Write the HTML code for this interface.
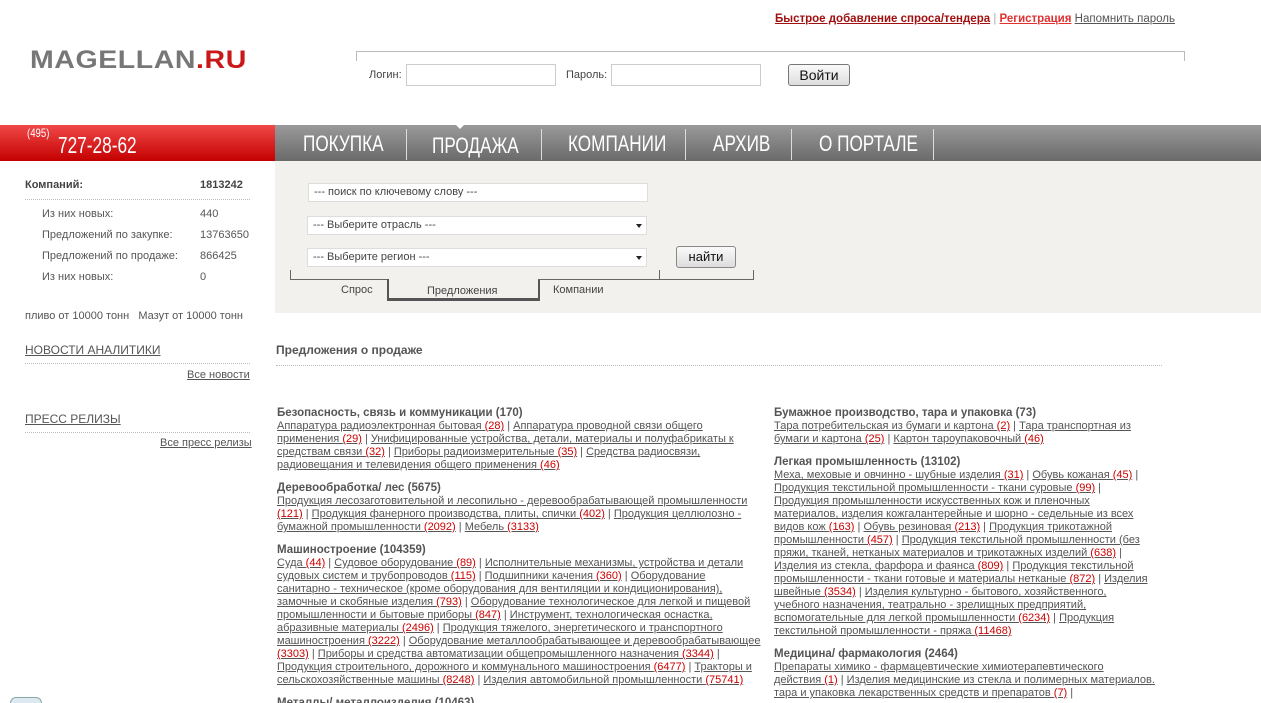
<!DOCTYPE html>
<html style="overflow:hidden;height:703px"><head><meta charset="utf-8"><style>
*{margin:0;padding:0;box-sizing:border-box}
body{width:1261px;height:703px;overflow:hidden;background:#fff;font-family:"Liberation Sans",sans-serif;font-size:11px;color:#555;position:relative}
.a{position:absolute;white-space:nowrap}
a{color:#555;text-decoration:underline}
.n{color:#cc0000}
.col{position:absolute;line-height:13px;font-size:11px;white-space:nowrap}
.col b{font-size:11.5px;color:#555;display:block}
.col p{margin-bottom:10px}
.nav span{position:absolute;top:0;height:36px;line-height:38px;color:#fff;font-family:"Liberation Sans Narrow","Liberation Sans",sans-serif;font-size:22px;transform:scaleX(.78);transform-origin:left}
.sep{position:absolute;top:4px;width:1px;height:31px;background:#ddd}
.inp{position:absolute;background:#fff;border:1px solid #ccc;height:22px}
.sel{position:absolute;background:#fff;border:1px solid #ddd;height:19px;font-size:11px;line-height:17px;padding-left:5px;color:#444}
.sel i{position:absolute;right:4px;top:7px;border-left:3.5px solid transparent;border-right:3.5px solid transparent;border-top:4px solid #222}
.dot{position:absolute;height:1px;border-top:1px dotted #bbb}
</style></head><body>
<div class="a" style="left:775px;top:13px;font-size:11.5px;">
<a style="color:#a01010;font-weight:bold">Быстрое добавление спроса/тендера</a> <span style="color:#aaa">|</span> <a style="color:#e03030;font-weight:bold">Регистрация</a> <a style="color:#555">Напомнить пароль</a></div>
<div class="a" style="left:30px;top:47px;font-size:25px;font-weight:bold;letter-spacing:0.5px;color:#777;transform:scaleX(1.14);transform-origin:left;line-height:26px">MAGELLAN<span style="color:#c81818">.RU</span></div>
<div class="a" style="left:356px;top:51px;width:829px;height:10px;border-top:1px solid #bbb;border-left:1px solid #bbb;border-right:1px solid #bbb"></div>
<div class="a" style="left:369px;top:69px;font-size:11px;color:#444">Логин:</div>
<div class="inp" style="left:406px;top:64px;width:150px"></div>
<div class="a" style="left:566px;top:69px;font-size:11px;color:#444">Пароль:</div>
<div class="inp" style="left:611px;top:64px;width:150px"></div>
<div class="a" style="left:788px;top:64px;width:62px;height:22px;border:1px solid #777;border-radius:3px;background:linear-gradient(#fafafa,#ddd);text-align:center;line-height:20px;font-size:14px;color:#111">Войти</div>
<div class="a" style="left:0;top:125px;width:275px;height:36px;background:linear-gradient(#f04848,#c40000)"></div>
<div class="a" style="left:27px;top:126px;color:#fff;font-family:'Liberation Sans Narrow','Liberation Sans',sans-serif;font-size:12px;transform:scaleX(.8);transform-origin:left">(495)</div>
<div class="a" style="left:58px;top:132px;color:#fff;font-family:'Liberation Sans Narrow','Liberation Sans',sans-serif;font-size:23px;line-height:26px;transform:scaleX(.75);transform-origin:left">727-28-62</div>
<div class="a nav" style="left:275px;top:125px;width:986px;height:36px;background:linear-gradient(#9a9a9a,#6a6a6a)">
<span style="left:28px">ПОКУПКА</span><div class="sep" style="left:131px"></div>
<span style="left:157px;top:2px">ПРОДАЖА</span><div class="sep" style="left:266px"></div>
<span style="left:293px">КОМПАНИИ</span><div class="sep" style="left:410px"></div>
<span style="left:438px">АРХИВ</span><div class="sep" style="left:516px"></div>
<span style="left:544px">О ПОРТАЛЕ</span><div class="sep" style="left:658px"></div>
</div>
<div class="a" style="left:456px;top:125px;border-left:4px solid transparent;border-right:4px solid transparent;border-top:4px solid #fff"></div>
<div class="a" style="left:275px;top:161px;width:986px;height:152px;background:#f2f1ee"></div>
<div class="sel" style="left:308px;top:183px;width:340px;border-color:#ddd">--- поиск по ключевому слову ---</div>
<div class="sel" style="left:307px;top:216px;width:340px">--- Выберите отрасль ---<i></i></div>
<div class="sel" style="left:307px;top:248px;width:340px">--- Выберите регион ---<i></i></div>
<div class="a" style="left:676px;top:246px;width:60px;height:22px;border:1px solid #888;border-radius:3px;background:linear-gradient(#fafafa,#ddd);text-align:center;line-height:20px;font-size:13px;color:#111">найти</div>
<div class="a" style="left:290px;top:270px;width:1px;height:9px;background:#666"></div>
<div class="a" style="left:290px;top:279px;width:98px;height:1px;background:#666"></div>
<div class="a" style="left:387px;top:279px;width:2px;height:21px;background:#555"></div>
<div class="a" style="left:387px;top:298px;width:153px;height:3px;background:#555"></div>
<div class="a" style="left:538px;top:279px;width:2px;height:21px;background:#555"></div>
<div class="a" style="left:538px;top:279px;width:216px;height:1px;background:#666"></div>
<div class="a" style="left:659px;top:270px;width:1px;height:9px;background:#666"></div>
<div class="a" style="left:753px;top:270px;width:1px;height:9px;background:#666"></div>
<div class="a" style="left:341px;top:284px;color:#444">Спрос</div>
<div class="a" style="left:427px;top:285px;color:#444">Предложения</div>
<div class="a" style="left:553px;top:284px;color:#444">Компании</div>
<div class="a" style="left:25px;top:179px;font-weight:bold;color:#444">Компаний:</div>
<div class="a" style="left:200px;top:179px;font-weight:bold;color:#444">1813242</div>
<div class="dot" style="left:25px;top:199px;width:225px"></div>
<div class="a" style="left:42px;top:208px">Из них новых:</div><div class="a" style="left:200px;top:208px">440</div>
<div class="a" style="left:42px;top:229px">Предложений по закупке:</div><div class="a" style="left:200px;top:229px">13763650</div>
<div class="a" style="left:42px;top:250px">Предложений по продаже:</div><div class="a" style="left:200px;top:250px">866425</div>
<div class="a" style="left:42px;top:271px">Из них новых:</div><div class="a" style="left:200px;top:271px">0</div>
<div class="a" style="left:25px;top:310px">пливо от 10000 тонн &nbsp; Мазут от 10000 тонн</div>
<div class="a" style="left:25px;top:343px;font-size:12px"><a>НОВОСТИ АНАЛИТИКИ</a></div>
<div class="dot" style="left:25px;top:363px;width:225px"></div>
<div class="a" style="left:187px;top:369px"><a>Все новости</a></div>
<div class="a" style="left:25px;top:412px;font-size:12px"><a>ПРЕСС РЕЛИЗЫ</a></div>
<div class="dot" style="left:25px;top:432px;width:225px"></div>
<div class="a" style="left:160px;top:437px"><a>Все пресс релизы</a></div>
<div class="a" style="left:10px;top:697px;width:32px;height:6px;border-radius:16px 16px 0 0;border:1px solid #8aa;border-bottom:0;background:#dde8f0"></div>
<div class="a" style="left:276px;top:343px;font-size:12px;font-weight:bold;color:#555">Предложения о продаже</div>
<div class="dot" style="left:276px;top:365px;width:886px"></div>
<div class="col" style="left:277px;top:407px">
<p><b>Безопасность, связь и коммуникации (170)</b>
<a>Аппаратура радиоэлектронная бытовая <span class="n">(28)</span></a> | <a>Аппаратура проводной связи общего</a><br>
<a>применения <span class="n">(29)</span></a> | <a>Унифицированные устройства, детали, материалы и полуфабрикаты к</a><br>
<a>средствам связи <span class="n">(32)</span></a> | <a>Приборы радиоизмерительные <span class="n">(35)</span></a> | <a>Средства радиосвязи,</a><br>
<a>радиовещания и телевидения общего применения <span class="n">(46)</span></a></p>
<p><b>Деревообработка/ лес (5675)</b>
<a>Продукция лесозаготовительной и лесопильно - деревообрабатывающей промышленности</a><br>
<a><span class="n">(121)</span></a> | <a>Продукция фанерного производства, плиты, спички <span class="n">(402)</span></a> | <a>Продукция целлюлозно -</a><br>
<a>бумажной промышленности <span class="n">(2092)</span></a> | <a>Мебель <span class="n">(3133)</span></a></p>
<p><b>Машиностроение (104359)</b>
<a>Суда <span class="n">(44)</span></a> | <a>Судовое оборудование <span class="n">(89)</span></a> | <a>Исполнительные механизмы, устройства и детали</a><br>
<a>судовых систем и трубопроводов <span class="n">(115)</span></a> | <a>Подшипники качения <span class="n">(360)</span></a> | <a>Оборудование</a><br>
<a>санитарно - техническое (кроме оборудования для вентиляции и кондиционирования),</a><br>
<a>замочные и скобяные изделия <span class="n">(793)</span></a> | <a>Оборудование технологическое для легкой и пищевой</a><br>
<a>промышленности и бытовые приборы <span class="n">(847)</span></a> | <a>Инструмент, технологическая оснастка,</a><br>
<a>абразивные материалы <span class="n">(2496)</span></a> | <a>Продукция тяжелого, энергетического и транспортного</a><br>
<a>машиностроения <span class="n">(3222)</span></a> | <a>Оборудование металлообрабатывающее и деревообрабатывающее</a><br>
<a><span class="n">(3303)</span></a> | <a>Приборы и средства автоматизации общепромышленного назначения <span class="n">(3344)</span></a> |<br>
<a>Продукция строительного, дорожного и коммунального машиностроения <span class="n">(6477)</span></a> | <a>Тракторы и</a><br>
<a>сельскохозяйственные машины <span class="n">(8248)</span></a> | <a>Изделия автомобильной промышленности <span class="n">(75741)</span></a></p>
<p><b>Металлы/ металлоизделия (10463)</b></p>
</div>
<div class="col" style="left:774px;top:407px">
<p><b>Бумажное производство, тара и упаковка (73)</b>
<a>Тара потребительская из бумаги и картона <span class="n">(2)</span></a> | <a>Тара транспортная из</a><br>
<a>бумаги и картона <span class="n">(25)</span></a> | <a>Картон тароупаковочный <span class="n">(46)</span></a></p>
<p><b>Легкая промышленность (13102)</b>
<a>Меха, меховые и овчинно - шубные изделия <span class="n">(31)</span></a> | <a>Обувь кожаная <span class="n">(45)</span></a> |<br>
<a>Продукция текстильной промышленности - ткани суровые <span class="n">(99)</span></a> |<br>
<a>Продукция промышленности искусственных кож и пленочных</a><br>
<a>материалов, изделия кожгалантерейные и шорно - седельные из всех</a><br>
<a>видов кож <span class="n">(163)</span></a> | <a>Обувь резиновая <span class="n">(213)</span></a> | <a>Продукция трикотажной</a><br>
<a>промышленности <span class="n">(457)</span></a> | <a>Продукция текстильной промышленности (без</a><br>
<a>пряжи, тканей, нетканых материалов и трикотажных изделий <span class="n">(638)</span></a> |<br>
<a>Изделия из стекла, фарфора и фаянса <span class="n">(809)</span></a> | <a>Продукция текстильной</a><br>
<a>промышленности - ткани готовые и материалы нетканые <span class="n">(872)</span></a> | <a>Изделия</a><br>
<a>швейные <span class="n">(3534)</span></a> | <a>Изделия культурно - бытового, хозяйственного,</a><br>
<a>учебного назначения, театрально - зрелищных предприятий,</a><br>
<a>вспомогательные для легкой промышленности <span class="n">(6234)</span></a> | <a>Продукция</a><br>
<a>текстильной промышленности - пряжа <span class="n">(11468)</span></a></p>
<p><b>Медицина/ фармакология (2464)</b>
<a>Препараты химико - фармацевтические химиотерапевтического</a><br>
<a>действия <span class="n">(1)</span></a> | <a>Изделия медицинские из стекла и полимерных материалов.</a><br>
<a>тара и упаковка лекарственных средств и препаратов <span class="n">(7)</span></a> |</p>
</div>
</body></html>
